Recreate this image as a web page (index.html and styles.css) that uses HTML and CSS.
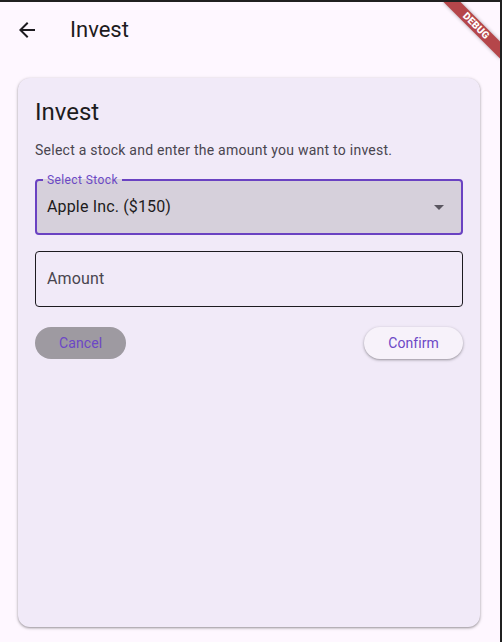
FILE: index.html
```html
<!DOCTYPE html>
<html>
<head>
<meta charset="utf-8">
<link rel="stylesheet" href="styles.css">
</head>
<body>
<div class="app">
  <header class="appbar">
    <div class="leading">
      <svg class="icon" viewBox="0 0 24 24" width="24" height="24"><path d="M20 11H7.83l5.59-5.59L12 4l-8 8 8 8 1.41-1.41L7.83 13H20v-2z" fill="#1d1b20"/></svg>
    </div>
    <div class="title">Invest</div>
  </header>
  <main class="body">
    <section class="card">
      <h1 class="card-title">Invest</h1>
      <p class="card-sub">Select a stock and enter the amount you want to invest.</p>
      <div class="field select">
        <span class="float-label">Select Stock</span>
        <span class="value">Apple Inc. ($150)</span>
        <svg class="drop" viewBox="0 0 24 24" width="24" height="24"><path d="M7 10l5 5 5-5z" fill="#5a5660"/></svg>
      </div>
      <div class="field amount">
        <span class="placeholder">Amount</span>
      </div>
      <div class="actions">
        <button class="btn cancel">Cancel</button>
        <button class="btn confirm">Confirm</button>
      </div>
    </section>
  </main>
  <div class="debug">DEBUG</div>
</div>
</body>
</html>
```

FILE: styles.css
```css
* { box-sizing: border-box; }
html, body { margin: 0; padding: 0; }
body {
  background: #202020;
  width: 502px;
  height: 642px;
  overflow: hidden;
  font-family: Roboto, "Noto Sans", sans-serif;
}
.app {
  position: relative;
  width: 500px;
  height: 640px;
  margin-top: 2px;
  background: #fef7ff;
  overflow: hidden;
  display: flex;
  flex-direction: column;
}
.appbar {
  height: 56px;
  display: flex;
  align-items: center;
  flex: none;
}
.leading {
  width: 54px;
  height: 56px;
  display: flex;
  align-items: center;
  justify-content: center;
}
.icon { display: block; }
.title {
  margin-left: 16px;
  font-size: 22px;
  color: #1d1b20;
  line-height: 28px;
}
.body {
  flex: 1;
  padding: 20px 20px 15px 18px;
  display: flex;
}
.card {
  flex: 1;
  background: #f1eaf8;
  border-radius: 12px;
  box-shadow: 0 1px 2px rgba(0,0,0,0.28), 0 1px 3px 1px rgba(0,0,0,0.12);
  padding: 18px 17px;
  display: flex;
  flex-direction: column;
}
.card-title {
  margin: 0;
  font-size: 24px;
  line-height: 32px;
  font-weight: 400;
  color: #1d1b20;
}
.card-sub {
  margin: 12px 0 0;
  font-size: 14px;
  line-height: 20px;
  letter-spacing: 0.25px;
  color: #49454f;
}
.field {
  position: relative;
  height: 56px;
  border-radius: 4px;
  display: flex;
  align-items: center;
  padding: 0 12px;
}
.select {
  margin-top: 19px;
  background: #d6d0db;
  border: 2px solid #6a42c2;
  padding-left: 10px;
  padding-right: 10px;
}
.float-label {
  position: absolute;
  left: 6px;
  top: -9px;
  padding: 0 4px;
  font-size: 12px;
  line-height: 16px;
  letter-spacing: 0.4px;
  color: #6a48c4;
  background: linear-gradient(to bottom, #f1eaf8 0, #f1eaf8 7px, #d6d0db 7px);
}
.value {
  flex: 1;
  font-size: 16px;
  line-height: 24px;
  letter-spacing: 0.15px;
  color: #1d1b20;
}
.drop { display: block; flex: none; }
.amount {
  margin-top: 16px;
  border: 1px solid #1d1b20;
  padding-left: 11px;
}
.placeholder {
  font-size: 16px;
  line-height: 24px;
  letter-spacing: 0.15px;
  color: #49454f;
}
.actions {
  margin-top: 20px;
  display: flex;
  justify-content: space-between;
  align-items: center;
}
.btn {
  height: 32px;
  border: none;
  border-radius: 16px;
  padding: 0 24px;
  font-family: Roboto, "Noto Sans", sans-serif;
  font-size: 14px;
  font-weight: 400;
  letter-spacing: 0.1px;
  color: #6c47c6;
  cursor: pointer;
}
.cancel {
  background: #9e9aa1;
}
.confirm {
  background: #f7f2fa;
  box-shadow: 0 1px 2px rgba(0,0,0,0.25), 0 1px 3px 1px rgba(0,0,0,0.1);
}
.debug {
  position: absolute;
  left: 436px;
  top: 18px;
  width: 80px;
  height: 12px;
  transform: rotate(45deg);
  background: #b5464a;
  box-shadow: 0 0 4px rgba(0,0,0,0.35);
  color: #fff;
  font-size: 10px;
  font-weight: 900;
  line-height: 12px;
  text-align: center;
  letter-spacing: 0.2px;
}
```
